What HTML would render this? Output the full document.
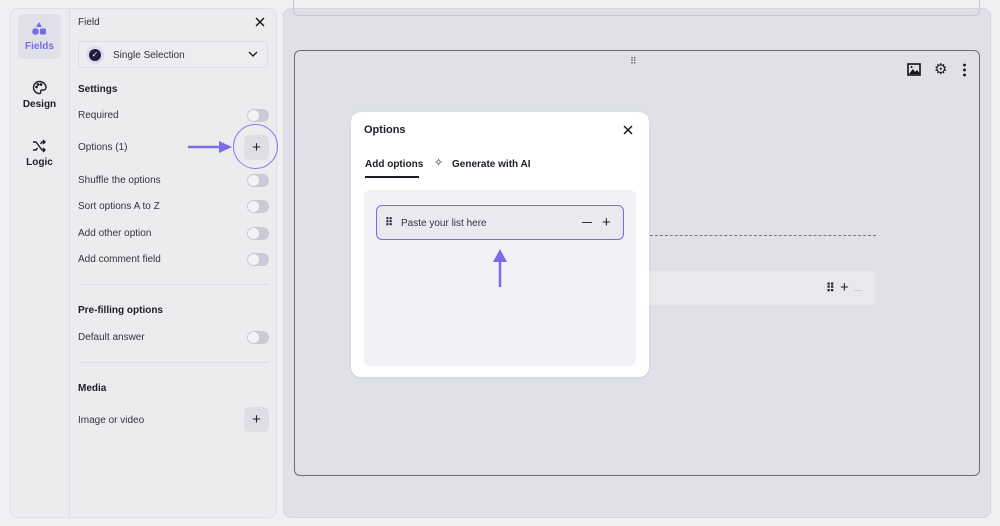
<!DOCTYPE html>
<html><head><meta charset="utf-8"><style>
*{box-sizing:border-box;margin:0;padding:0}
body{width:1000px;height:526px;background:#f0f0f3;font-family:"Liberation Sans",sans-serif;position:relative;overflow:hidden;color:#1d1d27}
.a{position:absolute}
.t{font-size:10px;color:#333340}
.b{font-size:10px;font-weight:bold;color:#1d1d27}
.tog{position:absolute;left:247px;width:22px;height:13px;border-radius:7px;background:#c9cad3}
.tog:after{content:"";position:absolute;left:1px;top:1px;width:11px;height:11px;border-radius:50%;background:#f3f3f6}
</style></head><body>
<div class="a" style="left:10px;top:8px;width:267px;height:510px;background:#ececef;border:1px solid #dedee4;border-radius:8px"></div>
<div class="a" style="left:69px;top:9px;width:1px;height:508px;background:#dcdce2"></div>
<div class="a" style="left:18px;top:14px;width:43px;height:45px;background:#e0e0e8;border-radius:6px"></div>
<svg class="a" style="left:31px;top:21px" width="16" height="15" viewBox="0 0 16 15"><path d="M8 1L11 6H5Z" fill="#7c6be8"/><circle cx="4.5" cy="10.5" r="3.3" fill="#7c6be8"/><rect x="9" y="7.5" width="6" height="6" rx="1" fill="#7c6be8"/></svg>
<div class="a" style="left:18px;top:41px;width:43px;text-align:center;font-size:10px;font-weight:bold;color:#7c6be8">Fields</div>
<svg class="a" style="left:32px;top:80px" width="15" height="15" viewBox="0 0 15 15" fill="none" stroke="#1d1d27" stroke-width="1.4"><path d="M7.5 1.5a6 6 0 1 0 0 12c1 0 1.5-.7 1.2-1.5-.4-1 .2-2 1.3-2h1.5a2.5 2.5 0 0 0 2.5-2.5c0-3.3-2.9-6-6.5-6z"/><circle cx="4.5" cy="7" r=".7"/><circle cx="6" cy="4.5" r=".7"/><circle cx="9" cy="4.5" r=".7"/></svg>
<div class="a" style="left:18px;top:99px;width:43px;text-align:center;font-size:10px;font-weight:bold">Design</div>
<svg class="a" style="left:32px;top:139px" width="15" height="14" viewBox="0 0 15 14" fill="none" stroke="#1d1d27" stroke-width="1.4"><path d="M1 3h3l6 8h3M1 11h3l1.5-2M8.5 5L10 3h3M11 1l2 2-2 2M11 9l2 2-2 2"/></svg>
<div class="a" style="left:18px;top:157px;width:43px;text-align:center;font-size:10px;font-weight:bold">Logic</div>

<div class="a t" style="left:78px;top:17px">Field</div>
<svg class="a" style="left:255px;top:17px" width="10" height="10"><path d="M1 1L9 9M9 1L1 9" stroke="#111" stroke-width="1.4"/></svg>
<div class="a" style="left:78px;top:41px;width:190px;height:27px;border:1px solid #dcdce3;border-radius:5px;background:#ededf0"></div>
<div class="a" style="left:86px;top:46px;width:18px;height:18px;border-radius:50%;background:#dcdaf0"></div>
<div class="a" style="left:89px;top:49px;width:12px;height:12px;border-radius:50%;background:#1f1d3a;color:#fff;font-size:8px;text-align:center;line-height:12px">✓</div>
<div class="a t" style="left:113px;top:50px">Single Selection</div>
<svg class="a" style="left:248px;top:50px" width="10" height="8"><path d="M1 2l4 4 4-4" stroke="#222" stroke-width="1.4" fill="none"/></svg>
<div class="a b" style="left:78px;top:84px">Settings</div>
<div class="a t" style="left:78px;top:110px">Required</div><div class="tog" style="top:109px"></div>
<div class="a t" style="left:78px;top:142px">Options (1)</div>
<div class="a" style="left:244px;top:135px;width:25px;height:25px;background:#dedee6;border-radius:5px;text-align:center;line-height:25px;font-size:15px">+</div>
<div class="a" style="left:233px;top:124px;width:45px;height:45px;border:1.5px solid #8a79ea;border-radius:50%"></div>
<svg class="a" style="left:187px;top:140px" width="46" height="14"><path d="M1 7H33" stroke="#7c6be8" stroke-width="2.5"/><path d="M32 1L45 7L32 13Z" fill="#7c6be8"/></svg>
<div class="a t" style="left:78px;top:175px">Shuffle the options</div><div class="tog" style="top:174px"></div>
<div class="a t" style="left:78px;top:201px">Sort options A to Z</div><div class="tog" style="top:200px"></div>
<div class="a t" style="left:78px;top:228px">Add other option</div><div class="tog" style="top:227px"></div>
<div class="a t" style="left:78px;top:254px">Add comment field</div><div class="tog" style="top:253px"></div>
<div class="a" style="left:78px;top:284px;width:191px;height:1px;background:#dcdce2"></div>
<div class="a b" style="left:78px;top:305px">Pre-filling options</div>
<div class="a t" style="left:78px;top:332px">Default answer</div><div class="tog" style="top:331px"></div>
<div class="a" style="left:78px;top:362px;width:191px;height:1px;background:#dcdce2"></div>
<div class="a b" style="left:78px;top:383px">Media</div>
<div class="a t" style="left:78px;top:415px">Image or video</div>
<div class="a" style="left:244px;top:407px;width:25px;height:25px;background:#dedee6;border-radius:5px;text-align:center;line-height:25px;font-size:15px">+</div>

<div class="a" style="left:283px;top:8px;width:708px;height:510px;background:#dfe0e8;border:1px solid #d5d6de;border-radius:8px"></div>
<div class="a" style="left:293px;top:0px;width:687px;height:16px;border:1px solid #c4c5ce;border-top:none;border-radius:0 0 6px 6px"></div>
<div class="a" style="left:294px;top:50px;width:686px;height:426px;border:1px solid #6b6c75;border-radius:6px"></div>
<div class="a" style="left:630px;top:56px;font-size:9px;color:#555;letter-spacing:-1px">⠿</div>
<svg class="a" style="left:907px;top:63px" width="14" height="13"><rect x="1" y="1" width="12" height="11" fill="none" stroke="#111" stroke-width="1.6"/><path d="M2 11L6 6l2 3 2-2 3 4Z" fill="#111"/><circle cx="4.5" cy="4" r="1" fill="#111"/></svg>
<div class="a" style="left:934px;top:60px;font-size:15px">⚙</div>
<svg class="a" style="left:962px;top:63px" width="5" height="14"><circle cx="2.5" cy="2" r="1.4" fill="#111"/><circle cx="2.5" cy="7" r="1.4" fill="#111"/><circle cx="2.5" cy="12" r="1.4" fill="#111"/></svg>
<div class="a" style="left:650px;top:235px;width:226px;border-top:1px dashed #77787f"></div>
<div class="a" style="left:630px;top:271px;width:245px;height:34px;background:#e8e8ed;border-radius:4px"></div>
<div class="a" style="left:826px;top:281px;font-size:12px;font-weight:bold">⠿</div>
<div class="a" style="left:840px;top:279px;font-size:15px">+</div>
<div class="a" style="left:854px;top:290px;width:8px;height:1px;background:#ccc"></div>

<div class="a" style="left:351px;top:112px;width:298px;height:265px;background:#fff;border-radius:10px;box-shadow:0 1px 3px rgba(0,0,0,.06)"></div>
<div class="a" style="left:364px;top:124px;font-size:11px;font-weight:bold">Options</div>
<svg class="a" style="left:623px;top:125px" width="10" height="10"><path d="M1 1L9 9M9 1L1 9" stroke="#111" stroke-width="1.4"/></svg>
<div class="a" style="left:365px;top:159px;font-size:10px;font-weight:bold">Add options</div>
<div class="a" style="left:365px;top:176px;width:54px;height:2px;background:#1d1d27"></div>
<div class="a" style="left:434px;top:156px;font-size:11px">✧</div>
<div class="a" style="left:452px;top:159px;font-size:10px;font-weight:bold">Generate with AI</div>
<div class="a" style="left:364px;top:190px;width:272px;height:176px;background:#f1f1f7;border-radius:6px"></div>
<div class="a" style="left:376px;top:205px;width:248px;height:35px;background:#e9e9f0;border:1.5px solid #7b68ee;border-radius:6px"></div>
<div class="a" style="left:385px;top:216px;font-size:11px;font-weight:bold">⠿</div>
<div class="a t" style="left:401px;top:218px">Paste your list here</div>
<div class="a" style="left:582px;top:222px;width:10px;height:1.2px;background:#333"></div>
<div class="a" style="left:602px;top:214px;font-size:15px">+</div>
<svg class="a" style="left:492px;top:248px" width="16" height="40"><path d="M8 10V39" stroke="#7c6be8" stroke-width="2.5"/><path d="M1 14L8 1L15 14Z" fill="#7c6be8"/></svg>
</body></html>
